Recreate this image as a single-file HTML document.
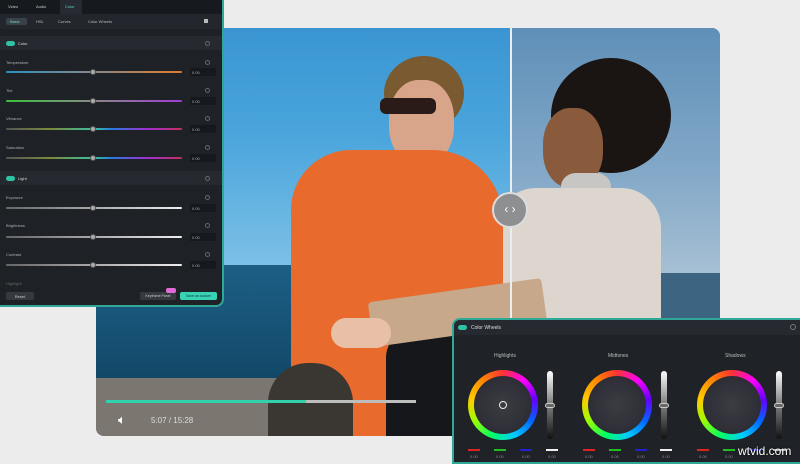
<!DOCTYPE html>
<html><head><meta charset="utf-8"><style>
*{margin:0;padding:0;box-sizing:border-box}
body{width:800px;height:462px;overflow:hidden;background:#ececec;font-family:"Liberation Sans",sans-serif;position:relative}
.a{position:absolute}
#video{left:96px;top:28px;width:624px;height:408px;border-radius:8px;overflow:hidden;background:#2a8cc8}
.lbl{position:absolute;left:6px;font-size:4px;color:#aab0b8}
.sl{position:absolute;left:6px;width:176px;height:2px;border-radius:1px}
.th{position:absolute;left:90px;width:6px;height:6px;border-radius:50%;background:#aaa;border:1px solid #555;margin-top:-2px}
.val{position:absolute;left:190px;width:26px;height:8px;background:#15181c;font-size:4px;color:#aaa;padding:2px 0 0 2px}
.gear{position:absolute;left:205px;width:5px;height:5px;border-radius:50%;border:1px solid #666}
.sec{position:absolute;left:0;width:222px;height:14px;background:#262a30}
.tog{position:absolute;left:6px;width:9px;height:5px;border-radius:3px;background:#2fc3a5}
.wheel{position:absolute;width:70px;height:70px;border-radius:50%;background:conic-gradient(#f33,#f0f,#60f,#06f,#0cf,#0f6,#9f0,#fc0,#f80,#f33)}
.wheel::after{content:"";position:absolute;left:6px;top:6px;width:58px;height:58px;border-radius:50%;background:radial-gradient(circle at 50% 50%,#3a3d42,#2e2d36 70%,#353038)}
.vs{position:absolute;width:6px;height:68px;border-radius:3px;background:linear-gradient(#fff,#888 45%,#111)}
.vs i{position:absolute;left:-2px;top:32px;width:10px;height:5px;border-radius:3px;border:1px solid #ccc;background:#666}
.cb{position:absolute;width:12px;height:2px;top:449px}
.cv{position:absolute;top:454px;font-size:4px;color:#888}
.wl{position:absolute;top:353px;font-size:5px;color:#bbb}
</style></head><body>

<div id="video" class="a">
  <div class="a" style="left:0;top:0;width:415px;height:237px;background:linear-gradient(180deg,#3a95d2 0%,#4aa5dc 45%,#7cc0e6 100%)"></div>
  <div class="a" style="left:0;top:237px;width:415px;height:120px;background:linear-gradient(#1d5f86,#114766)"></div>
  <div class="a" style="left:0;top:350px;width:415px;height:60px;background:#7b7670"></div>
  <div class="a" style="left:415px;top:0;width:209px;height:245px;background:linear-gradient(180deg,#5f8fb8,#84a9c8 60%,#a6bfd3)"></div>
  <div class="a" style="left:415px;top:245px;width:209px;height:60px;background:#3d6480"></div>
  <div class="a" style="left:415px;top:290px;width:209px;height:120px;background:#4a5560"></div>
  <!-- woman -->
  <div class="a" style="left:455px;top:30px;width:120px;height:115px;border-radius:50%;background:#1a1412"></div>
  <div class="a" style="left:447px;top:80px;width:60px;height:80px;border-radius:45%;background:#8a5a3c"></div>
  <div class="a" style="left:465px;top:145px;width:50px;height:45px;border-radius:30%;background:#c8c6c4"></div>
  <div class="a" style="left:400px;top:160px;width:165px;height:250px;border-radius:40px 40px 0 0;background:#dcd6ce"></div>
  <!-- man -->
  <div class="a" style="left:288px;top:28px;width:80px;height:75px;border-radius:50%;background:#7a5a30"></div>
  <div class="a" style="left:293px;top:52px;width:65px;height:85px;border-radius:45%;background:#d8a58a"></div>
  <div class="a" style="left:284px;top:70px;width:56px;height:16px;border-radius:6px;background:#2a1a18"></div>
  <div class="a" style="left:195px;top:122px;width:212px;height:290px;border-radius:60px 70px 0 0;background:#e86a2c"></div>
  <div class="a" style="left:290px;top:300px;width:115px;height:110px;border-radius:30px 0 0 0;background:#15171a"></div>
  <div class="a" style="left:274px;top:262px;width:175px;height:45px;transform:rotate(-8deg);background:#c8a88a;border-radius:4px"></div>
  <div class="a" style="left:235px;top:290px;width:60px;height:30px;border-radius:15px;background:#e8c0a8"></div>
  <div class="a" style="left:172px;top:335px;width:85px;height:90px;border-radius:40px 40px 0 0;background:#3a3632"></div>
  <!-- divider -->
  <div class="a" style="left:414px;top:0;width:2px;height:408px;background:#e8eef2"></div>
  <div class="a" style="left:396px;top:164px;width:36px;height:36px;border-radius:50%;background:#8d8f90;border:2px solid #ddd;color:#fff;font-size:12px;text-align:center;line-height:31px">‹ ›</div>
  <div class="a" style="left:10px;top:372px;width:310px;height:3px;background:#bdbdbd"></div>
  <div class="a" style="left:10px;top:372px;width:200px;height:3px;background:#31d1ad"></div>
  <div class="a" style="left:22px;top:384px;color:#fff;font-size:13px">🔈︎</div>
  <div class="a" style="left:55px;top:388px;color:#ddd;font-size:8px">5:07 / 15:28</div>
</div>

<div class="a" style="left:0;top:0;width:224px;height:307px;background:#1e2227;border-right:2px solid #2fa897;border-bottom:2px solid #2fa897;border-radius:0 0 8px 0;overflow:hidden">
  <div class="a" style="left:0;top:0;width:222px;height:14px;background:#16191d"></div>
  <div class="a" style="left:60px;top:0;width:22px;height:14px;background:#262b31"></div>
  <div class="a" style="left:8px;top:4px;font-size:4px;color:#ccc">Video</div>
  <div class="a" style="left:36px;top:4px;font-size:4px;color:#ccc">Audio</div>
  <div class="a" style="left:65px;top:4px;font-size:4px;color:#5fd6c4">Color</div>
  <div class="a" style="left:0;top:14px;width:222px;height:15px;background:#23272d"></div>
  <div class="a" style="left:6px;top:18px;width:21px;height:7px;border-radius:2px;background:#3a4148"></div>
  <div class="a" style="left:10px;top:19px;font-size:4px;color:#6fd6c4">Basic</div>
  <div class="a" style="left:36px;top:19px;font-size:4px;color:#bbb">HSL</div>
  <div class="a" style="left:58px;top:19px;font-size:4px;color:#bbb">Curves</div>
  <div class="a" style="left:88px;top:19px;font-size:4px;color:#bbb">Color Wheels</div>
  <div class="a" style="left:204px;top:19px;width:4px;height:4px;background:#bbb"></div>

  <div class="sec" style="top:36px"></div><div class="tog" style="top:41px"></div>
  <div class="a" style="left:18px;top:41px;font-size:4px;color:#ddd">Color</div><div class="gear" style="top:41px"></div>

  <div class="lbl" style="top:60px">Temperature</div><div class="gear" style="top:60px"></div>
  <div class="sl" style="top:71px;background:linear-gradient(90deg,#2a8fc4,#888 50%,#e07a2a)"></div><div class="th" style="top:71px"></div><div class="val" style="top:68px">0.00</div>
  <div class="lbl" style="top:88px">Tint</div><div class="gear" style="top:88px"></div>
  <div class="sl" style="top:100px;background:linear-gradient(90deg,#3ac23a,#888 50%,#a03ad8)"></div><div class="th" style="top:100px"></div><div class="val" style="top:97px">0.00</div>
  <div class="lbl" style="top:116px">Vibrance</div><div class="gear" style="top:116px"></div>
  <div class="sl" style="top:128px;background:linear-gradient(90deg,#555,#7a8a3a 25%,#3ac0a0 50%,#2a7ae0 60%,#a030d0 80%,#c03060)"></div><div class="th" style="top:128px"></div><div class="val" style="top:125px">0.00</div>
  <div class="lbl" style="top:145px">Saturation</div><div class="gear" style="top:145px"></div>
  <div class="sl" style="top:157px;background:linear-gradient(90deg,#555,#7a8a3a 25%,#3ac0a0 50%,#2a7ae0 60%,#a030d0 80%,#c03060)"></div><div class="th" style="top:157px"></div><div class="val" style="top:154px">0.00</div>

  <div class="sec" style="top:171px"></div><div class="tog" style="top:176px"></div>
  <div class="a" style="left:18px;top:176px;font-size:4px;color:#ddd">Light</div><div class="gear" style="top:176px"></div>

  <div class="lbl" style="top:195px">Exposure</div><div class="gear" style="top:195px"></div>
  <div class="sl" style="top:207px;background:linear-gradient(90deg,#666,#eee)"></div><div class="th" style="top:207px"></div><div class="val" style="top:204px">0.00</div>
  <div class="lbl" style="top:223px">Brightness</div><div class="gear" style="top:223px"></div>
  <div class="sl" style="top:236px;background:linear-gradient(90deg,#666,#eee)"></div><div class="th" style="top:236px"></div><div class="val" style="top:233px">0.00</div>
  <div class="lbl" style="top:252px">Contrast</div><div class="gear" style="top:252px"></div>
  <div class="sl" style="top:264px;background:linear-gradient(90deg,#666,#eee)"></div><div class="th" style="top:264px"></div><div class="val" style="top:261px">0.00</div>
  <div class="lbl" style="top:281px;color:#666">Highlight</div>

  <div class="a" style="left:6px;top:292px;width:28px;height:8px;border-radius:2px;background:#353a40;font-size:4px;color:#ccc;text-align:center;padding-top:2px">Reset</div>
  <div class="a" style="left:140px;top:292px;width:36px;height:8px;border-radius:2px;background:#353a40;font-size:3.5px;color:#ccc;text-align:center;padding-top:2px">Keyframe Panel</div>
  <div class="a" style="left:166px;top:288px;width:10px;height:5px;border-radius:2px;background:#e06ad8"></div>
  <div class="a" style="left:180px;top:292px;width:37px;height:8px;border-radius:2px;background:#38d2b4;font-size:3.5px;color:#134;text-align:center;padding-top:2px">Save as custom</div>
</div>

<div class="a" style="left:452px;top:318px;width:350px;height:146px;background:#1f2328;border:2px solid #2fa897;border-radius:8px 0 0 0">
  <div class="a" style="left:0;top:0;width:348px;height:15px;background:#262a30;border-radius:6px 0 0 0"></div>
  <div class="a" style="left:4px;top:5px;width:9px;height:5px;border-radius:3px;background:#2fc3a5"></div>
  <div class="a" style="left:17px;top:5px;font-size:5px;color:#ddd">Color Wheels</div>
  <div class="a" style="left:336px;top:4px;width:6px;height:6px;border-radius:50%;border:1px solid #777"></div>
</div>
<div class="wl" style="left:494px">Highlights</div>
<div class="wl" style="left:608px">Midtones</div>
<div class="wl" style="left:725px">Shadows</div>
<div class="wheel" style="left:468px;top:370px"></div>
<div class="wheel" style="left:582px;top:370px"></div>
<div class="wheel" style="left:697px;top:370px"></div>
<div class="a" style="left:499px;top:401px;width:8px;height:8px;border-radius:50%;border:1.5px solid #eee"></div>
<div class="vs" style="left:547px;top:371px"><i></i></div>
<div class="vs" style="left:661px;top:371px"><i></i></div>
<div class="vs" style="left:776px;top:371px"><i></i></div>
<div class="cb" style="left:468px;background:#d22"></div><div class="cb" style="left:494px;background:#2b2"></div><div class="cb" style="left:520px;background:#22c"></div><div class="cb" style="left:546px;background:#eee"></div>
<div class="cb" style="left:583px;background:#d22"></div><div class="cb" style="left:609px;background:#2b2"></div><div class="cb" style="left:635px;background:#22c"></div><div class="cb" style="left:660px;background:#eee"></div>
<div class="cb" style="left:697px;background:#d22"></div><div class="cb" style="left:723px;background:#2b2"></div><div class="cb" style="left:749px;background:#22c"></div><div class="cb" style="left:774px;background:#eee"></div>
<div class="cv" style="left:470px">0.00</div><div class="cv" style="left:496px">0.00</div><div class="cv" style="left:522px">0.00</div><div class="cv" style="left:548px">0.00</div>
<div class="cv" style="left:585px">0.00</div><div class="cv" style="left:611px">0.00</div><div class="cv" style="left:637px">0.00</div><div class="cv" style="left:662px">0.00</div>
<div class="cv" style="left:699px">0.00</div><div class="cv" style="left:725px">0.00</div>
<div class="a" style="left:738px;top:444px;font-size:12px;color:#fff;text-shadow:0 0 2px #000">wtvid.com</div>
</body></html>
